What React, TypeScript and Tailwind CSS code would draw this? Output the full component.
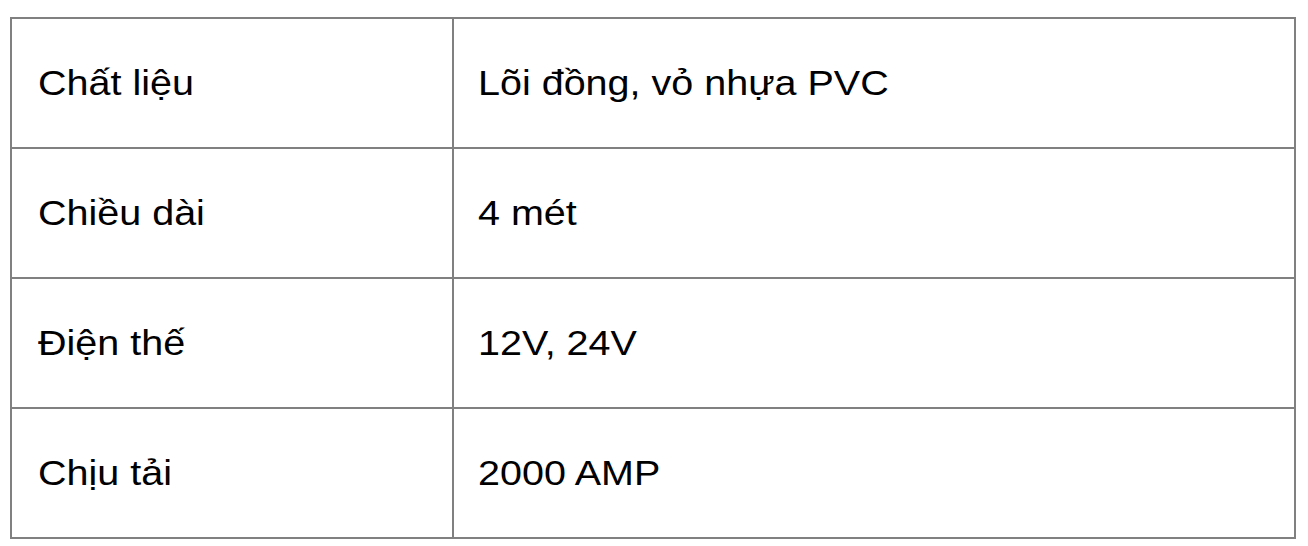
import React from "react";

const rows: [string, string][] = [
  ["Chất liệu", "Lõi đồng, vỏ nhựa PVC"],
  ["Chiều dài", "4 mét"],
  ["Điện thế", "12V, 24V"],
  ["Chịu tải", "2000 AMP"],
];

export default function App() {
  return (
    <div className="bg-white w-[1308px] h-[546px] pt-[17px] pl-[10px]" style={{ fontFamily: '"Liberation Sans", Arial, sans-serif' }}>
      <table className="border-collapse w-[1286px] text-[39.5px] leading-[45px] text-black">
        <tbody>
          {rows.map(([a, b]) => (
            <tr key={a} className="h-[130px]">
              <td className="border-2 border-[#808080] w-[442px] pl-[26px] align-middle">
                <span className="inline-block scale-y-[0.875]">{a}</span>
              </td>
              <td className="border-2 border-[#808080] pl-[24px] align-middle">
                <span className="inline-block scale-y-[0.875]">{b}</span>
              </td>
            </tr>
          ))}
        </tbody>
      </table>
    </div>
  );
}
